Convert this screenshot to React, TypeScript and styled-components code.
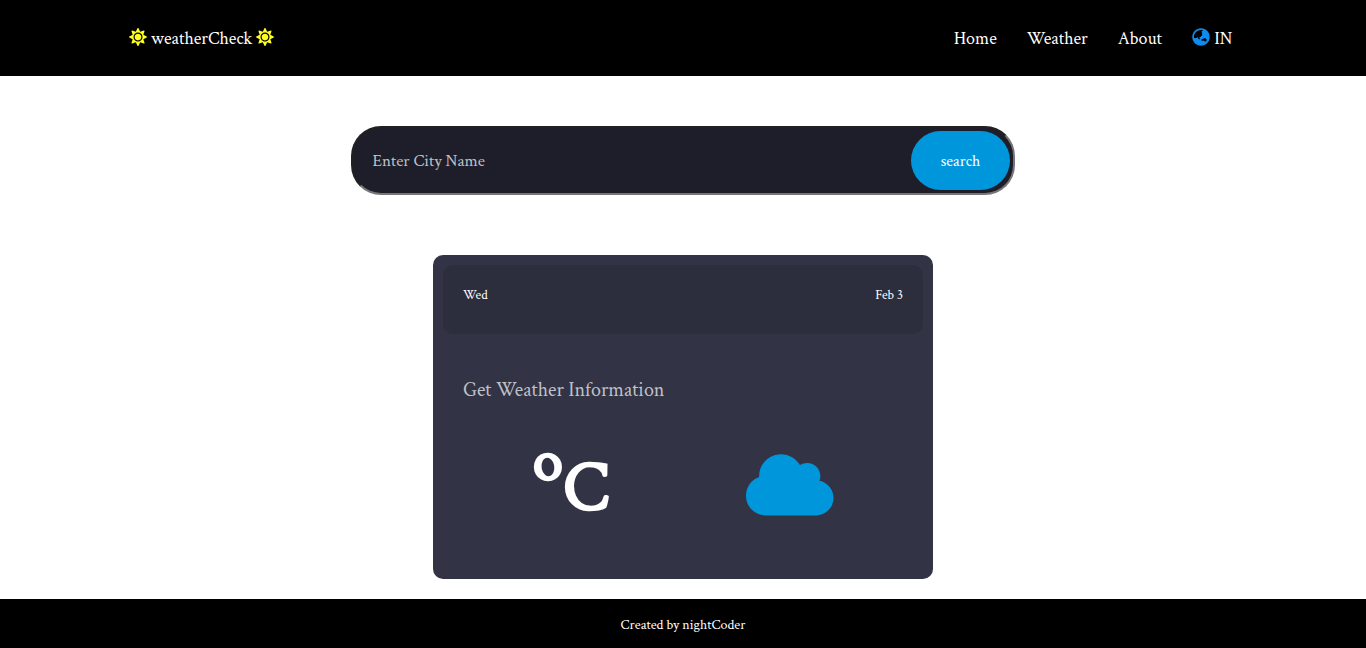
import React from "react";
import styled, { createGlobalStyle } from "styled-components";
import { FaCloud, FaGlobeAsia, FaSun } from "react-icons/fa";

const GlobalStyle = createGlobalStyle`
  * { box-sizing: border-box; }
  body {
    margin: 0;
    background: #fff;
    font-family: "Crimson Text", "Liberation Serif", serif;
    overflow: hidden;
  }
`;

const Page = styled.div`
  display: flex;
  flex-direction: column;
  height: 648px;
`;

const Header = styled.header`
  display: flex;
  align-items: center;
  justify-content: space-between;
  height: 76px;
  padding: 2px 133.6px 0 129px;
  background: #000;
  color: #fff;
  font-size: 18px;
  line-height: 20px;
  svg {
    margin-bottom: 4px;
  }
`;

const Brand = styled.div`
  display: flex;
  align-items: center;
  gap: 4px;
  svg {
    color: #ffff1f;
  }
`;

const Nav = styled.nav`
  display: flex;
  gap: 30px;
`;

const NavLink = styled.a`
  display: flex;
  align-items: center;
  gap: 4px;
  svg {
    color: #0a8cf0;
  }
`;

const Main = styled.main`
  flex: 1;
  display: flex;
  flex-direction: column;
  align-items: center;
  padding-top: 50px;
`;

const SearchForm = styled.form`
  display: grid;
  grid-template-columns: 1fr 104px;
  align-items: center;
  width: 664px;
  height: 69px;
`;

const CityInput = styled.input`
  grid-area: 1 / 1 / 2 / 3;
  width: 100%;
  height: 69px;
  padding: 1px 120px 0 19.5px;
  border: 2px inset rgb(118, 118, 118);
  border-radius: 30px;
  background: #1e1e2a;
  color: #bfc1c8;
  font-family: inherit;
  font-size: 17px;
  outline: none;
  &::placeholder {
    color: #bfc1c8;
    opacity: 1;
  }
`;

const SearchButton = styled.button`
  grid-area: 1 / 2 / 2 / 3;
  z-index: 1;
  width: 99px;
  height: 59px;
  padding: 1px 0 0;
  border: 0;
  border-radius: 30px;
  background: #0096db;
  color: #fff;
  font-family: inherit;
  font-size: 16px;
`;

const Card = styled.section`
  width: 500px;
  height: 324px;
  margin-top: 60px;
  padding: 10px;
  border-radius: 10px;
  background: #323345;
`;

const DateBar = styled.div`
  display: flex;
  justify-content: space-between;
  height: 69px;
  padding: 22px 20px 0;
  border-radius: 10px;
  background: #2d2e3d;
  color: #fff;
  font-size: 13.33px;
  line-height: 16px;
`;

const Prompt = styled.p`
  margin: 44px 20px 0;
  color: #bfc1c8;
  font-size: 20px;
  line-height: 24px;
`;

const Conditions = styled.div`
  display: flex;
  justify-content: space-between;
  align-items: center;
  margin-top: 34px;
  height: 98px;
  padding: 0 89.5px 0 90px;
`;

const Temperature = styled.h1`
  display: flex;
  align-items: flex-start;
  margin: 0;
  height: 98px;
  color: #fff;
  font-size: 72px;
  font-weight: 400;
  line-height: 106px;
  -webkit-text-stroke: 2.4px #fff;
  sup {
    font-size: 60px;
    line-height: 53px;
    -webkit-text-stroke-width: 2.6px;
  }
`;

const Footer = styled.footer`
  height: 49px;
  padding-top: 18px;
  background: #000;
  color: #fff;
  text-align: center;
  font-size: 14px;
  line-height: 17px;
`;

export default function App() {
  return (
    <Page>
      <GlobalStyle />
      <Header>
        <Brand>
          <FaSun size={18} />
          <span>weatherCheck</span>
          <FaSun size={18} />
        </Brand>
        <Nav>
          <NavLink>Home</NavLink>
          <NavLink>Weather</NavLink>
          <NavLink>About</NavLink>
          <NavLink>
            <FaGlobeAsia size={18} />
            <span>IN</span>
          </NavLink>
        </Nav>
      </Header>
      <Main>
        <SearchForm onSubmit={(e) => e.preventDefault()}>
          <CityInput placeholder="Enter City Name" />
          <SearchButton type="submit">search</SearchButton>
        </SearchForm>
        <Card>
          <DateBar>
            <span>Wed</span>
            <span>Feb 3</span>
          </DateBar>
          <Prompt>Get Weather Information</Prompt>
          <Conditions>
            <Temperature>
              <sup>o</sup>C
            </Temperature>
            <FaCloud size={87.5} color="#0096db" />
          </Conditions>
        </Card>
      </Main>
      <Footer>Created by nightCoder</Footer>
    </Page>
  );
}
